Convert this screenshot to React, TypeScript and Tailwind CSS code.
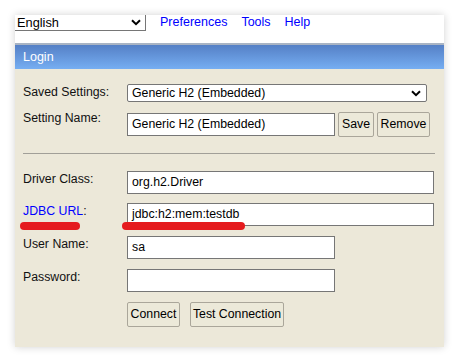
import React from "react";

const font = { fontFamily: '"Liberation Sans", Arial, sans-serif' };

function Chevron() {
  return (
    <svg width="10" height="7" viewBox="0 0 10 7" className="shrink-0">
      <path d="M1 1.2 L5 5.2 L9 1.2" fill="none" stroke="#000" strokeWidth="2" />
    </svg>
  );
}

function Btn({ children, w }: { children: React.ReactNode; w: string }) {
  return (
    <div
      className={`h-[25px] ${w} flex items-center justify-center whitespace-nowrap border border-[#aaa69a] rounded-[2px] bg-[#ece9d9] text-[12.3px] text-black`}
    >
      {children}
    </div>
  );
}

function Input({ value, w }: { value?: string; w: string }) {
  return (
    <div
      className={`h-[23px] ${w} border border-[#767676] bg-white flex items-center pl-[4px] text-[12.3px] text-black`}
    >
      {value}
    </div>
  );
}

function Label({ children, blue }: { children: React.ReactNode; blue?: boolean }) {
  return (
    <div className={`w-[104px] shrink-0 text-[12.3px] leading-[15px] pt-[1px] ${blue ? "text-[#0000ff]" : "text-[#111]"}`}>
      {children}
    </div>
  );
}

export default function App() {
  return (
    <div className="w-[458px] h-[361px] bg-white pt-[15px] pl-[15px]" style={font}>
      <div className="relative w-[429px] shadow-[0_0_8px_rgba(0,0,0,0.18)]">
        {/* toolbar */}
        <div className="h-[28px] bg-white flex items-start">
          <div className="w-[131px] h-[16px] border border-[#767676] border-t-0 border-l-0 flex items-center justify-between pl-[2px] pr-[4px] text-[12.8px] text-black">
            <span>English</span>
            <Chevron />
          </div>
          <div className="flex text-[12.5px] text-[#0000ff] leading-[15px] ml-[14px] gap-[14px]">
            <span>Preferences</span>
            <span>Tools</span>
            <span>Help</span>
          </div>
        </div>
        {/* header */}
        <div className="h-[26px] border-t-2 border-[#a9b4c4] bg-gradient-to-b from-[#5580c6] to-[#76aef2] flex items-center pl-[8px] text-[12.5px] text-white">
          Login
        </div>
        {/* body */}
        <div className="bg-[#ece8d9] pl-[8px] pr-[9px] pt-[15px] pb-[20px]">
          <div className="flex items-start">
            <Label>Saved Settings:</Label>
            <div className="w-[300px] h-[18px] border border-[#767676] rounded-[2px] bg-white flex items-center justify-between pl-[4px] pr-[5px] text-[12.3px] text-black">
              <span>Generic H2 (Embedded)</span>
              <Chevron />
            </div>
          </div>
          <div className="flex items-start mt-[10px]">
            <Label>
              <span className="relative top-[-2px]">Setting Name:</span>
            </Label>
            <div className="mt-[1px]">
              <Input value="Generic H2 (Embedded)" w="w-[208px]" />
            </div>
            <div className="ml-[3px]">
              <Btn w="w-[36px]">Save</Btn>
            </div>
            <div className="ml-[3px]">
              <Btn w="w-[53px]">Remove</Btn>
            </div>
          </div>
          <div className="h-px bg-[#a19f98] mt-[16px]" />
          <div className="flex items-start mt-[17px]">
            <Label>Driver Class:</Label>
            <Input value="org.h2.Driver" w="w-[307px]" />
          </div>
          <div className="flex items-start mt-[9px]">
            <Label blue>
              JDBC URL<span className="text-[#111]">:</span>
            </Label>
            <Input value="jdbc:h2:mem:testdb" w="w-[307px]" />
          </div>
          <div className="flex items-start mt-[10px]">
            <Label>User Name:</Label>
            <Input value="sa" w="w-[208px]" />
          </div>
          <div className="flex items-start mt-[10px]">
            <Label>Password:</Label>
            <Input w="w-[208px]" />
          </div>
          <div className="flex items-start mt-[10px] ml-[104px] gap-[10px]">
            <Btn w="w-[53px]">Connect</Btn>
            <Btn w="w-[94px]">Test Connection</Btn>
          </div>
        </div>
        {/* red annotations */}
        <div className="absolute left-[5px] top-[207px] w-[60px] h-[8px] rounded-full bg-[#e51b1e]" />
        <div className="absolute left-[107px] top-[207px] w-[123px] h-[8px] rounded-full bg-[#e51b1e]" />
      </div>
    </div>
  );
}
